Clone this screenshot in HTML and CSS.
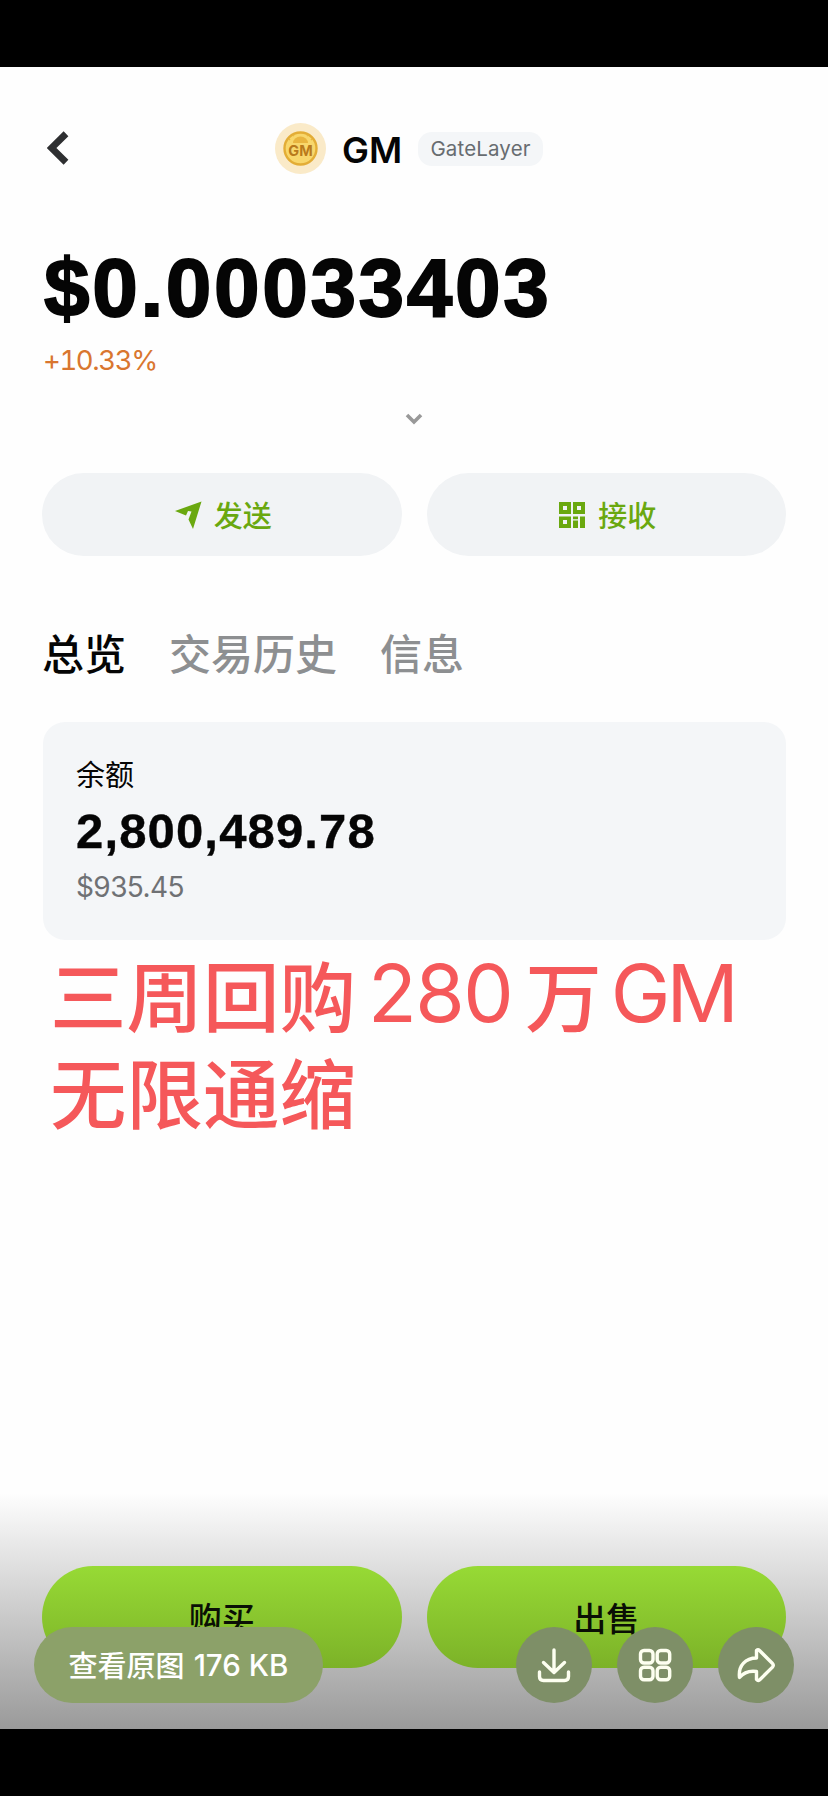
FILE: index.html
```html
<!DOCTYPE html>
<html lang="zh-CN">
<head>
<meta charset="utf-8">
<title>GM</title>
<link rel="stylesheet" href="styles.css">
</head>
<body>
<main class="screen">
  <header class="header">
    <svg class="back" width="22" height="34" viewBox="0 0 22 34"><path d="M19 2.800 4.500 17 19 31.200" fill="none" stroke="#2e2f31" stroke-width="6.800"/></svg>
    <div class="token">
      <svg class="coin" width="51" height="51" viewBox="0 0 51 51">
        <circle cx="25.500" cy="25.500" r="25.500" fill="#faeac8"/>
        <circle cx="25.500" cy="25.500" r="16" fill="#f8d76c" stroke="#e3ad36" stroke-width="2.400"/>
        <path d="M18 20a7.500 6.500 0 0 1 15 0z" fill="#e9b53f"/>
        <path d="M25.500 11v-1M19 13l-1-1M32 13l1-1M15 17l-1-1M36 17l1-1" stroke="#e9b53f" stroke-width="1.500"/>
        <text x="25.500" y="32.500" class="coin-text" text-anchor="middle">GM</text>
      </svg>
      <span class="symbol">GM</span>
      <span class="chain">GateLayer</span>
    </div>
  </header>

  <div class="price">$0.00033403</div>
  <div class="change">+10.33%</div>
  <div class="expand">
    <svg width="18" height="12" viewBox="0 0 18 12"><path d="m2 2 7 7 7-7" fill="none" stroke="#999" stroke-width="3.600"/></svg>
  </div>

  <div class="actions">
    <button class="action">
      <svg width="28" height="28" viewBox="0 0 28 28"><path d="M27.500.5 19 28 14.500 18.500 17.500 10.500 14 10 12 14.500 1 10z" fill="#6aa80f"/></svg>
      <span>发送</span>
    </button>
    <button class="action">
      <svg width="28" height="28" viewBox="0 0 28 28"><path fill="#6aa80f" fill-rule="evenodd" d="M1 1h12v12H1zM5 5v4h4V5zM15 1h12v12H15zM19 5v4h4V5zM1 15.500h12V27H1zM5 19v4h4v-4zM15 15.500h5v2.700h-5zM15 19.400h5V27h-5zM22 15.500h5V27h-5z"/></svg>
      <span>接收</span>
    </button>
  </div>

  <nav class="tabs">
    <span class="tab tab-active">总览</span>
    <span class="tab">交易历史</span>
    <span class="tab">信息</span>
  </nav>

  <section class="card">
    <div class="card-label">余额</div>
    <div class="card-amount">2,800,489.78</div>
    <div class="card-value">$935.45</div>
  </section>

  <div class="note">
    <div>三周回购<span class="latin digits">280</span>万<span class="latin caps">GM</span></div>
    <div>无限通缩</div>
  </div>

  <footer class="trade">
    <button class="trade-btn">购买</button>
    <button class="trade-btn">出售</button>
  </footer>

  <div class="viewer">
    <button class="original"><span>查看原图</span><span class="size">176 KB</span></button>
    <div class="tools">
      <button class="tool"><svg width="38" height="38" viewBox="0 0 38 38"><path d="M19 4v22M8.500 16.500 19 26.500l10.500-10M4.500 26v4.500q0 4 4 4h21q4 0 4-4V26"/></svg></button>
      <button class="tool"><svg width="38" height="38" viewBox="0 0 38 38"><rect x="4.500" y="4.500" width="12.500" height="12.500" rx="3.500"/><rect x="21.200" y="4.500" width="12.500" height="12.500" rx="3.500"/><rect x="4.500" y="21.200" width="12.500" height="12.500" rx="3.500"/><rect x="21.200" y="21.200" width="12.500" height="12.500" rx="3.500"/></svg></button>
      <button class="tool"><svg width="38" height="38" viewBox="0 0 38 38"><path d="M19.500 4.500q1.500-1.500 3 0L35.500 17.500q1.500 1.800 0 3.600L22.500 34q-1.500 1.200-3-.5V25.500C12 24.500 7 26 2.500 31.500 1 19 9 12 19.500 12z"/></svg></button>
    </div>
  </div>
</main>
</body>
</html>
```
FILE: styles.css
```css
* { box-sizing: border-box; }

body { margin: 0; background: #000; }

button { border: 0; padding: 0; font: inherit; }

svg { display: block; flex: none; }

.screen {
  position: relative;
  display: flex;
  flex-direction: column;
  width: 828px;
  height: 1796px;
  border-top: 67px solid #000;
  border-bottom: 67px solid #000;
  background: #fefefe;
  font-family: "Noto Sans CJK SC", sans-serif;
  color: #050505;
}

.header {
  display: flex;
  align-items: center;
  height: 163px;
  padding-left: 47px;
}

.back { margin-top: -1px; }

.token {
  display: flex;
  align-items: center;
  margin-left: 206px;
  font-family: Inter, sans-serif;
}

.coin-text { font: 700 14.5px Inter, sans-serif; fill: #b97a1c; }

.symbol {
  width: 76px;
  margin-left: 16px;
  font-size: 36px;
  font-weight: 600;
  line-height: 44px;
  padding-top: 3px;
}

.chain {
  width: 125px;
  border-radius: 14px;
  background: #f4f6f8;
  color: #676c70;
  font-size: 20.5px;
  letter-spacing: 0.15px;
  line-height: 34px;
  text-align: center;
}

.price {
  height: 112px;
  padding: 2px 0 0 44px;
  font: 700 82px/112px "Liberation Sans", Arial, sans-serif;
  letter-spacing: 2.6px;
  -webkit-text-stroke: 1.8px #050505;
}

.change {
  padding: 1px 0 0 43px;
  font: 400 27.5px/34px Inter, sans-serif;
  font-feature-settings: "tnum";
  letter-spacing: -1.4px;
  color: #d9762f;
}

.expand {
  display: flex;
  justify-content: center;
  height: 96px;
  padding-top: 36px;
}

.actions {
  display: grid;
  grid-template-columns: 1fr 1fr;
  gap: 25px;
  padding: 0 42px;
}

.action {
  display: flex;
  align-items: center;
  justify-content: center;
  gap: 12px;
  height: 83px;
  padding-left: 2px;
  border-radius: 42px;
  background: #f1f3f5;
  color: #6aa80f;
  font-size: 29px;
  font-weight: 500;
  line-height: 40px;
}

.action span { margin-top: -2px; }

.tabs {
  display: flex;
  gap: 43px;
  height: 166px;
  padding: 66px 0 0 42px;
}

.tab {
  color: #8d8f91;
  font-size: 42px;
  font-weight: 500;
  line-height: 60px;
}

.tab-active { color: #050505; }

.card {
  height: 218px;
  margin: 0 42px 0 43px;
  padding: 31px 33px;
  border-radius: 22px;
  background: #f4f6f8;
}

.card-label { font-size: 29px; line-height: 40px; }

.card-amount {
  height: 75px;
  padding-top: 1px;
  font: 700 49px/75px "Liberation Sans", Arial, sans-serif;
  letter-spacing: 1.15px;
  -webkit-text-stroke: 0.4px #050505;
}

.card-value {
  color: #6f7174;
  font: 400 28px/38px Inter, sans-serif;
  letter-spacing: -0.6px;
}

.note {
  margin-top: 4px;
  padding-left: 50px;
  color: #f5585a;
  font-size: 76.5px;
  font-weight: 500;
  line-height: 97px;
  white-space: nowrap;
}

.latin {
  position: relative;
  top: -4px;
  font-family: Inter, sans-serif;
  font-size: 80px;
  font-weight: 400;
  line-height: 1;
}

.digits { margin: 0 13px 0 12px; letter-spacing: -1.5px; }

.caps { margin-left: 9px; letter-spacing: -4px; }

.trade {
  display: grid;
  grid-template-columns: 1fr 1fr;
  align-items: start;
  gap: 25px;
  height: 236px;
  margin-top: auto;
  padding: 73px 42px 0;
  background: linear-gradient(#fefefe, #9a9a9a);
}

.trade-btn {
  height: 102px;
  border-radius: 51px;
  background: linear-gradient(#97da35, #7cb228);
  color: #0a0f05;
  font-size: 33px;
  font-weight: 500;
  line-height: 102px;
}

.viewer {
  position: absolute;
  left: 34px;
  right: 34px;
  bottom: 26px;
  display: flex;
  justify-content: space-between;
}

.original {
  display: flex;
  align-items: center;
  justify-content: center;
  gap: 9px;
  width: 289px;
  height: 76px;
  border-radius: 38px;
  background: #8ca169;
  color: #fff;
  font-size: 29px;
  font-weight: 500;
  line-height: 40px;
}

.original span:first-child { margin-top: -2px; }

.size { font-family: Inter, sans-serif; font-size: 29.5px; }

.tools { display: flex; gap: 25px; }

.tool {
  display: flex;
  align-items: center;
  justify-content: center;
  width: 76px;
  height: 76px;
  border-radius: 50%;
  background: #7e8f67;
}

.tool svg {
  fill: none;
  stroke: #fdfff0;
  stroke-width: 3.4;
  stroke-linecap: round;
  stroke-linejoin: round;
}
```
